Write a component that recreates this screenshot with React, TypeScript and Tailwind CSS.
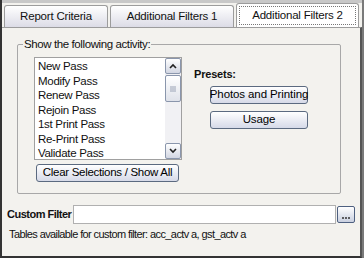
const items = [
  "New Pass",
  "Modify Pass",
  "Renew Pass",
  "Rejoin Pass",
  "1st Print Pass",
  "Re-Print Pass",
  "Validate Pass",
];

function Btn({ children, className = "" }: { children: React.ReactNode; className?: string }) {
  return (
    <div
      className={`flex items-center justify-center whitespace-nowrap rounded-[3px] border border-[#5b6a80] bg-gradient-to-b from-white to-[#d6dae8] text-black ${className}`}
    >
      {children}
    </div>
  );
}

export default function App() {
  return (
    <div
      className="h-[258px] w-[364px] overflow-hidden bg-[#7a7a7a] text-[11px] text-[#111]"
      style={{ fontFamily: '"Liberation Sans", Arial, sans-serif' }}
    >
      <div className="flex h-[258px] w-[362px] flex-col border-l-2 border-[#333] bg-[#f3f2ee]">
        {/* tabs */}
        <div className="flex h-[27px] items-end gap-[2px] border-t-[3px] border-[#c8c8c8] bg-[#f3f2ee] pl-[2px]">
          <div className="flex h-[22px] w-[104px] items-center justify-center rounded-t-[3px] border border-b-0 border-[#9c9c9c] bg-gradient-to-b from-white to-[#dcdce6] text-[11.5px] tracking-[-0.2px]">
            Report Criteria
          </div>
          <div className="flex h-[22px] w-[124px] items-center justify-center rounded-t-[3px] border border-b-0 border-[#9c9c9c] bg-gradient-to-b from-white to-[#dcdce6] text-[11.5px] tracking-[-0.2px]">
            Additional Filters 1
          </div>
          <div className="flex h-[24px] w-[123px] flex-col rounded-t-[3px] border border-b-0 border-[#9c9c9c] bg-white">
            <div className="h-[2px] bg-[#f2b23c]" />
            <div className="m-[2px] flex flex-1 items-center justify-center border border-dotted border-[#777] text-[11.5px] tracking-[-0.2px]">
              Additional Filters 2
            </div>
          </div>
        </div>
        {/* panel */}
        <div className="flex flex-1 flex-col border-t border-r-2 border-b-2 border-[#9c9c9c] border-r-[#555] border-b-[#333] px-[5px]">
          <div className="relative ml-[10px] mr-[14px] mt-[16px] h-[150px] rounded-[2px] border border-[#a8a8a8]">
            <div className="absolute left-[5px] top-[-8px] bg-[#f3f2ee] px-[1px] text-[11.5px] leading-[14px] tracking-[-0.4px]">
              Show the following activity:
            </div>
            <div className="flex pl-[16px] pt-[12px]">
              <div className="flex flex-col">
                <div className="flex h-[103px] w-[148px] border border-[#a0a0a0] bg-white">
                  <div className="flex-1 pl-[3px] pt-[1px] text-[11.5px] leading-[14.5px] tracking-[-0.3px]">
                    {items.map((it) => (
                      <div key={it}>{it}</div>
                    ))}
                  </div>
                  <div className="flex w-[16px] flex-col bg-[#f1f1f4]">
                    <div className="flex h-[16px] items-center justify-center rounded-[2px] border border-[#8a96ac] bg-gradient-to-b from-white to-[#d2d6e2]">
                      <svg width="8" height="6" viewBox="0 0 8 6"><path d="M1 5 L4 2 L7 5" stroke="#222" strokeWidth="1.6" fill="none" /></svg>
                    </div>
                    <div className="mt-[1px] flex h-[27px] items-center justify-center rounded-[2px] border border-[#8a96ac] bg-gradient-to-b from-white to-[#dfe2ea]">
                      <svg width="6" height="6" viewBox="0 0 6 6"><path d="M0 1H6M0 3H6M0 5H6" stroke="#9aa3b6" strokeWidth="1" /></svg>
                    </div>
                    <div className="flex-1" />
                    <div className="flex h-[16px] items-center justify-center rounded-[2px] border border-[#8a96ac] bg-gradient-to-b from-white to-[#d2d6e2]">
                      <svg width="8" height="6" viewBox="0 0 8 6"><path d="M1 1 L4 4 L7 1" stroke="#222" strokeWidth="1.6" fill="none" /></svg>
                    </div>
                  </div>
                </div>
                <Btn className="ml-[2px] mt-[4px] h-[18px] w-[143px] text-[11.5px] tracking-[-0.3px]">Clear Selections / Show All</Btn>
              </div>
              <div className="ml-[12px] flex flex-col pt-[11px]">
                <div className="text-[11px] font-bold leading-[13px] tracking-[-0.2px]">Presets:</div>
                <Btn className="ml-[16px] mt-[5px] h-[18px] w-[98px] text-[11.5px] tracking-[-0.1px]">Photos and Printing</Btn>
                <Btn className="ml-[16px] mt-[7px] h-[18px] w-[98px] text-[11.5px] tracking-[-0.1px]">Usage</Btn>
              </div>
            </div>
          </div>
          <div className="mt-[11px] flex items-center">
            <div className="w-[66px] whitespace-nowrap text-[11px] font-bold tracking-[-0.5px]">Custom Filter</div>
            <div className="h-[19px] w-[264px] border border-[#b0b0b0] bg-white" />
            <div className="ml-[1px] flex h-[17px] w-[18px] items-end justify-center rounded-[2px] border border-[#4e6080] bg-gradient-to-b from-white to-[#c9d0e0] pb-[3px]">
              <svg width="10" height="2" viewBox="0 0 10 2"><path d="M1 1h2M4 1h2M7 1h2" stroke="#333" strokeWidth="1.6" /></svg>
            </div>
          </div>
          <div className="mt-[2px] pl-[2px] text-[11px] tracking-[-0.6px]">Tables available for custom filter: acc_actv a, gst_actv a</div>
        </div>
      </div>
    </div>
  );
}
